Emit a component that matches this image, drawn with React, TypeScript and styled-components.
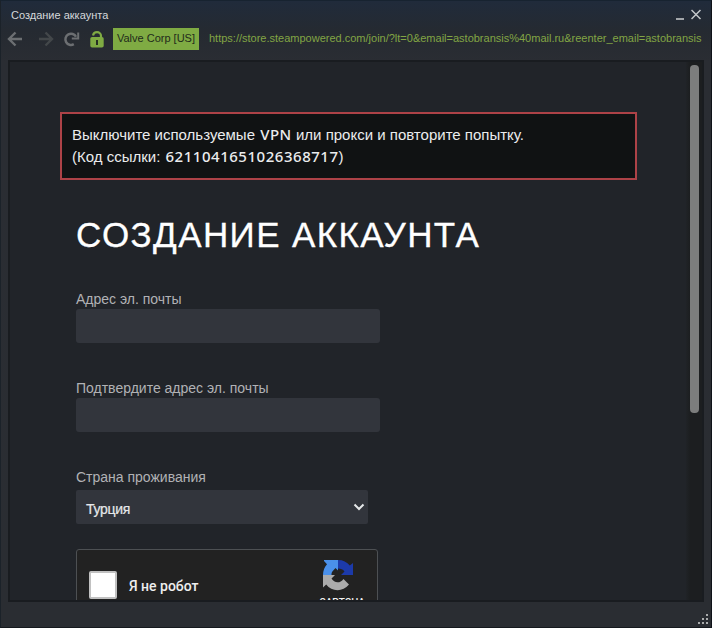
import React from "react";
import styled, { createGlobalStyle } from "styled-components";

const GlobalStyle = createGlobalStyle`
  * { box-sizing: border-box; }
  body { margin: 0; background: #22252a; overflow: hidden; }
`;

const Window = styled.div`
  width: 712px;
  height: 628px;
  display: flex;
  flex-direction: column;
  position: relative;
  border: 1px solid #1b2229;
  border-right-color: #0f1218;
  border-bottom-color: #15191e;
  border-top-color: #172330;
  background: linear-gradient(180deg, #202b3b 0, #252a31 30px, #2a2d33 60px, #2a2d32 100%);
  font-family: "Liberation Sans", Arial, sans-serif;
`;

const TitleBar = styled.header`
  height: 25px;
  flex: none;
  display: flex;
  justify-content: space-between;
  padding: 0 9px 0 10px;
`;

const Title = styled.span`
  font-size: 11px;
  line-height: 28px;
  color: #d5d8db;
`;

const WindowControls = styled.div`
  display: flex;
  gap: 6px;
  padding-top: 8px;
`;

const AddressBar = styled.nav`
  height: 34px;
  flex: none;
  display: flex;
  align-items: flex-start;
  padding: 2px 0 0 6px;
`;

const NavIcon = styled.svg<{ $gap: number }>`
  flex: none;
  margin: 3px ${(p) => p.$gap}px 0 0;
`;

const Certificate = styled.span`
  flex: none;
  width: 86px;
  height: 22px;
  background: #7fab43;
  color: #1f2b1b;
  font-size: 11px;
  line-height: 20px;
  text-align: center;
  white-space: nowrap;
`;

const Url = styled.span`
  margin-left: 10px;
  font-size: 11px;
  line-height: 21px;
  color: #82a544;
  white-space: nowrap;
`;

const Viewport = styled.div`
  height: 542px;
  flex: none;
  margin: 0 7px;
  display: flex;
  overflow: hidden;
  border: 2px solid #191c20;
  background: #212429;
`;

const Page = styled.main`
  flex: 1;
  min-width: 0;
  padding: 50px 0 0 50px;
`;

const ScrollTrack = styled.div`
  flex: none;
  width: 16px;
  padding: 3px 2px 0 3px;
  background: linear-gradient(90deg, #202327, #1c1e20 4px);
`;

const ScrollThumb = styled.div`
  width: 9px;
  margin-left: 1px;
  height: 348px;
  border-radius: 4px;
  background: #7c7d7d;
`;

const ErrorBox = styled.div`
  width: 577px;
  height: 68px;
  padding: 10px;
  border: 2px solid #ad4247;
  background: #101213;
  color: #ebeced;
  font-size: 15px;
  line-height: 22px;
  white-space: nowrap;
`;

const Latin = styled.span`
  margin-left: 1px;
  font-family: "Noto Sans", sans-serif;
  font-size: 15px;
  font-weight: 500;
  line-height: 1;
  letter-spacing: 0.53px;
`;

const Form = styled.form`
  padding-left: 16px;
`;

const Heading = styled.h1`
  margin: 34px 0;
  font-size: 35px;
  line-height: 42px;
  font-weight: 400;
  letter-spacing: 1.4px;
  color: #fff;
  -webkit-text-stroke: 0.3px #fff;
  text-transform: uppercase;
  white-space: nowrap;
`;

const Field = styled.div<{ $labelHeight: number; $after: number }>`
  display: grid;
  grid-template-rows: ${(p) => p.$labelHeight}px 34px;
  margin-bottom: ${(p) => p.$after}px;
`;

const Label = styled.label`
  font-size: 14px;
  line-height: 18px;
  color: #b1b2b5;
  white-space: nowrap;
`;

const Input = styled.input`
  width: 304px;
  height: 34px;
  padding: 0 10px;
  border: 0;
  border-radius: 3px;
  background: #32353c;
  color: #e4e6e8;
`;

const Select = styled.button`
  width: 292px;
  height: 34px;
  display: flex;
  align-items: center;
  justify-content: space-between;
  padding: 3px 3px 0 10px;
  border: 0;
  border-radius: 2px;
  background: #32353c;
  color: #e6e8ea;
  font: 14px "Liberation Sans", Arial, sans-serif;
  letter-spacing: -0.3px;
  -webkit-text-stroke: 0.2px #e6e8ea;
`;

const SelectArrow = styled.svg`
  margin-bottom: 3px;
`;

const Captcha = styled.div`
  width: 302px;
  height: 76px;
  display: flex;
  padding: 0 12px;
  border: 1px solid #4d5053;
  border-radius: 3px;
  background: #222222;
`;

const Checkbox = styled.span`
  width: 28px;
  height: 28px;
  margin-top: 21px;
  border: 2px solid #c1c1c1;
  border-radius: 2px;
  background: #fff;
`;

const CaptchaText = styled.span`
  flex: 1;
  margin: 25px 0 0 12px;
  font: 500 14px/22px Roboto, sans-serif;
  color: #eeeeee;
`;

const CaptchaBrand = styled.div`
  width: 56px;
  padding-top: 9px;
  display: flex;
  flex-direction: column;
  align-items: flex-end;
  color: #f0f0f0;
  font: 500 10px/12px Roboto, sans-serif;
  white-space: nowrap;
`;

const BrandLogo = styled.svg`
  flex: none;
  margin: 0 11px 6px 0;
`;

const ResizeGrip = styled.svg`
  position: absolute;
  right: 3px;
  bottom: 3px;
`;

const gripDots = [[8, 0], [4, 4], [8, 4], [0, 8], [4, 8], [8, 8]];

export default function App() {
  return (
    <>
      <GlobalStyle />
      <Window>
        <TitleBar>
          <Title>Создание аккаунта</Title>
          <WindowControls>
            <svg width="9" height="12"><path d="M0 10h8" stroke="#c3c7ca" strokeWidth="1.6" /></svg>
            <svg width="11" height="12"><path d="M0.5 1l9 9M9.5 1l-9 9" stroke="#c3c7ca" strokeWidth="1.5" /></svg>
          </WindowControls>
        </TitleBar>
        <AddressBar>
          <NavIcon $gap={15} width="16" height="16" fill="none" stroke="#6c6f72" strokeWidth="2.4">
            <path d="M15 8H2M8.5 1.5L2 8L8.5 14.5" />
          </NavIcon>
          <NavIcon $gap={9} width="16" height="16" fill="none" stroke="#43474a" strokeWidth="2.4">
            <path d="M1 8H14M7.5 1.5L14 8L7.5 14.5" />
          </NavIcon>
          <NavIcon $gap={10} width="17" height="16" fill="none" stroke="#6c6f72" strokeWidth="2.5">
            <path d="M10.8 13.2A5.6 5.6 0 1 1 13 5.8" />
            <path d="M15.2 1.5V7.4H8.8" strokeWidth="2" />
          </NavIcon>
          <NavIcon $gap={9} width="14" height="17" fill="none">
            <path d="M3 4.5C3.5 2.2 4.8 1.2 7 1.2S11 2.7 11 5V8" stroke="#7fab43" strokeWidth="2.2" />
            <rect x="0.3" y="6" width="13.4" height="10.5" rx="1.8" fill="#7fab43" />
            <path d="M7 9v5" stroke="#263023" strokeWidth="2" />
          </NavIcon>
          <Certificate>Valve Corp [US]</Certificate>
          <Url>https://store.steampowered.com/join/?lt=0&amp;email=astobransis%40mail.ru&amp;reenter_email=astobransis</Url>
        </AddressBar>
        <Viewport>
          <Page>
            <ErrorBox>
              <div>Выключите используемые <Latin>VPN</Latin> или прокси и повторите попытку.</div>
              <div>(Код ссылки: <Latin>6211041651026368717</Latin>)</div>
            </ErrorBox>
            <Form>
              <Heading>Создание аккаунта</Heading>
              <Field $labelHeight={19} $after={36}>
                <Label htmlFor="email">Адрес эл. почты</Label>
                <Input id="email" />
              </Field>
              <Field $labelHeight={19} $after={36}>
                <Label htmlFor="confirm">Подтвердите адрес эл. почты</Label>
                <Input id="confirm" />
              </Field>
              <Field $labelHeight={22} $after={25}>
                <Label htmlFor="country">Страна проживания</Label>
                <Select id="country" type="button">
                  Турция
                  <SelectArrow width="12" height="8" fill="none"><path d="M1.5 1.5L6 6L10.5 1.5" stroke="#e6e8ea" strokeWidth="2" /></SelectArrow>
                </Select>
              </Field>
              <Captcha>
                <Checkbox />
                <CaptchaText>Я не робот</CaptchaText>
                <CaptchaBrand>
                  <BrandLogo width="32" height="32" viewBox="0 0 32 32">
                    <path d="M16 1V11.5L13.5 9L11 11.8C9.7 13 9.5 14.5 9.5 16H1C1 11.5 2.5 8.2 5 5.2L2 2V1z" fill="#4a90ea" />
                    <path d="M16 1C21 1 25 3 27.8 6.5L31 4V16H19L22.5 12.5C21 10.2 19 9.5 16 9.5z" fill="#1c3aa9" />
                    <path d="M1 16H13L9.5 19.6C12 24 18 25 21.5 20L27 25.5C20.5 33.5 9.5 32.5 4.2 25.5L1 28.5z" fill="#ababab" />
                  </BrandLogo>
                  reCAPTCHA
                </CaptchaBrand>
              </Captcha>
            </Form>
          </Page>
          <ScrollTrack><ScrollThumb /></ScrollTrack>
        </Viewport>
        <ResizeGrip width="10" height="10" fill="#aaacad">
          {gripDots.map(([x, y]) => <rect key={`${x}-${y}`} x={x} y={y} width="2" height="2" />)}
        </ResizeGrip>
      </Window>
    </>
  );
}
